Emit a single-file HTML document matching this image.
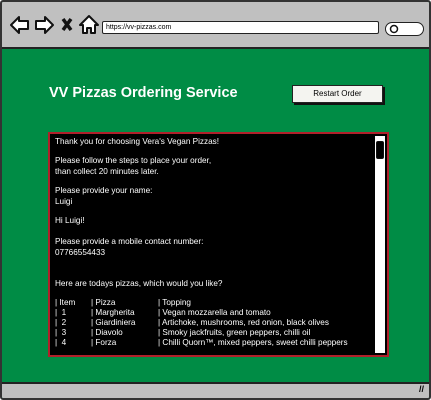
<!DOCTYPE html><html><head><style>
body{margin:0;width:431px;height:400px;overflow:hidden;background:#fff;font-family:"Liberation Sans",sans-serif;position:relative}
.frame{position:absolute;left:0;top:0;width:427px;height:396px;border:2px solid #333;border-radius:3px;background:#008c45;overflow:hidden}
.tb{position:absolute;left:0;top:0;right:0;height:45px;background:#c0c0c0;border-bottom:2px solid #222}
.bb{position:absolute;left:0;bottom:0;right:0;height:14px;background:#c0c0c0;border-top:2px solid #222}
.url{position:absolute;left:100px;top:19px;width:272px;height:11px;background:#fff;border:1.5px solid #222;border-radius:2px;font-size:7px;line-height:11px;padding-left:3px;box-sizing:content-box}
.srch{position:absolute;left:383px;top:20px;width:37px;height:12px;background:#fff;border:1.5px solid #222;border-radius:8px}
h1{position:absolute;left:47px;top:83px;margin:0;color:#fff;font-size:14.5px;font-weight:bold}
.btn{position:absolute;left:290px;top:83px;width:89px;height:16px;background:#f4f4f0;border:1px solid #222;box-shadow:2px 2px 0 #111;font-size:8px;text-align:center;line-height:16px}
.term{position:absolute;left:46px;top:130px;width:337px;height:221px;background:#000;border:2px solid #b0202a}
.sb{position:absolute;right:2px;top:2px;width:10px;bottom:2px;background:#fff}
.t{position:absolute;color:#fff;font-size:8.2px;white-space:pre;left:5px}
</style></head><body><div class="frame">
<div class="tb">
<svg width="100" height="45" style="position:absolute;left:6px;top:8px" fill="#fff" stroke="#111" stroke-width="2" stroke-linejoin="round">
<path d="M3 15 L11 7 L11 11 L20 11 L20 19 L11 19 L11 23 Z"/>
<path d="M45 15 L37 7 L37 11 L28 11 L28 19 L37 19 L37 23 Z"/>
<path d="M55 9 L63 20 M63 9 L55 20" stroke-width="3.5" fill="none"/>
<path d="M81 6 L72 15 L75 15 L75 23 L79 23 L79 18 L83 18 L83 23 L87 23 L87 15 L90 15 Z"/>
</svg>
<div class="url">https://vv-pizzas.com</div>
<div class="srch"><svg width="12" height="12" style="position:absolute;left:3px;top:0"><circle cx="5" cy="6" r="3.5" fill="none" stroke="#111" stroke-width="1.5"/></svg></div>
</div>
<h1>VV Pizzas Ordering Service</h1>
<div class="btn">Restart Order</div>
<div class="term">
<div class="sb"><div style="position:absolute;left:1px;top:1px;width:6px;height:16px;border:1px solid #111;border-radius:2px;background:#000;margin-top:4px"></div></div>
<div class="t" style="top:3px">Thank you for choosing Vera's Vegan Pizzas!</div>
<div class="t" style="top:22px">Please follow the steps to place your order,</div>
<div class="t" style="top:33px">than collect 20 minutes later.</div>
<div class="t" style="top:52px">Please provide your name:</div>
<div class="t" style="top:63px">Luigi</div>
<div class="t" style="top:82px">Hi Luigi!</div>
<div class="t" style="top:103px">Please provide a mobile contact number:</div>
<div class="t" style="top:114px">07766554433</div>
<div class="t" style="top:145px">Here are todays pizzas, which would you like?</div>
<div class="t" style="top:164px">| Item</div><div class="t" style="top:164px;left:41px">| Pizza</div><div class="t" style="top:164px;left:108px">| Topping</div>
<div class="t" style="top:174px">|  1</div><div class="t" style="top:174px;left:41px">| Margherita</div><div class="t" style="top:174px;left:108px">| Vegan mozzarella and tomato</div>
<div class="t" style="top:184px">|  2</div><div class="t" style="top:184px;left:41px">| Giardiniera</div><div class="t" style="top:184px;left:108px">| Artichoke, mushrooms, red onion, black olives</div>
<div class="t" style="top:194px">|  3</div><div class="t" style="top:194px;left:41px">| Diavolo</div><div class="t" style="top:194px;left:108px">| Smoky jackfruits, green peppers, chilli oil</div>
<div class="t" style="top:204px">|  4</div><div class="t" style="top:204px;left:41px">| Forza</div><div class="t" style="top:204px;left:108px">| Chilli Quorn™, mixed peppers, sweet chilli peppers</div>
</div>
<div class="bb"><span style="position:absolute;right:5px;top:0;font-size:9px;font-weight:bold">//</span></div>
</div></body></html>
